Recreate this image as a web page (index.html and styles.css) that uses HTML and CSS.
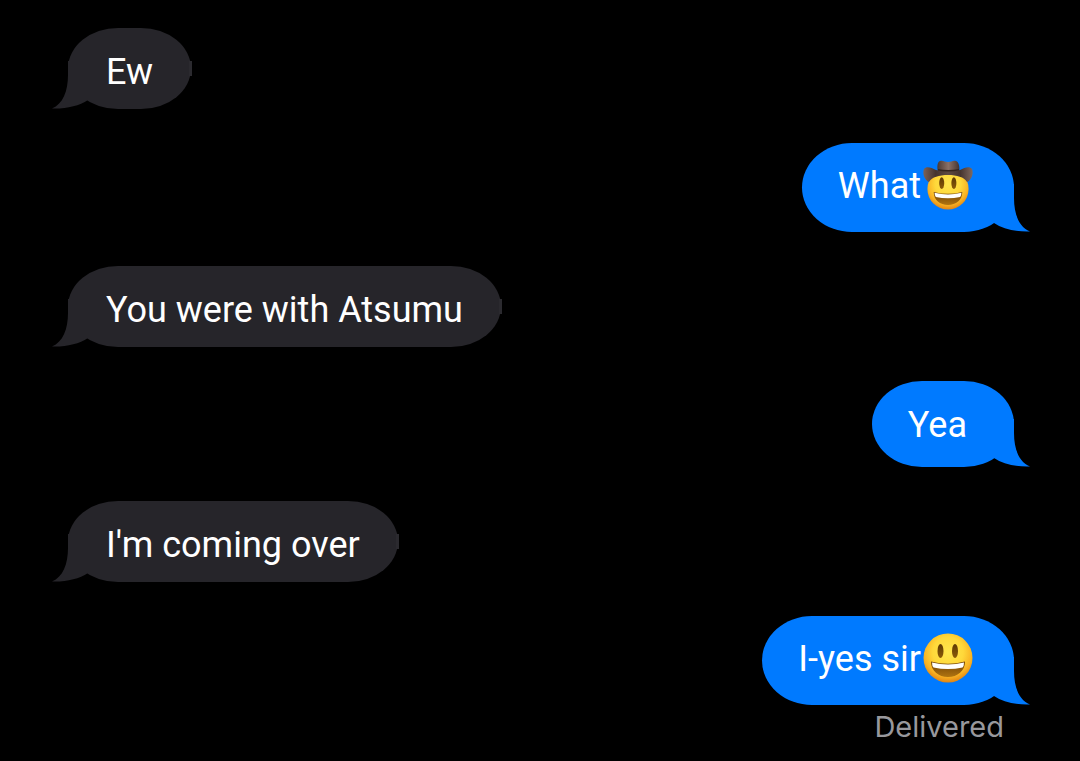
FILE: index.html
```html
<!DOCTYPE html>
<html lang="en">
<head>
    <meta charset="UTF-8">
    <meta name="viewport" content="width=device-width, initial-scale=1.0">
    <title>Messages</title>
    <link rel="stylesheet" href="styles.css">
</head>
<body>
    <!-- shared shapes -->
    <svg class="defs" aria-hidden="true">
        <defs>
            <radialGradient id="face" cx="50%" cy="38%" r="62%">
                <stop offset="0" stop-color="#ffe64e"/>
                <stop offset="0.5" stop-color="#ffd83a"/>
                <stop offset="0.8" stop-color="#f9b323"/>
                <stop offset="1" stop-color="#e08415"/>
            </radialGradient>
            <linearGradient id="eye" x1="0" y1="0" x2="0" y2="1">
                <stop offset="0" stop-color="#5e3904"/>
                <stop offset="1" stop-color="#8b5a08"/>
            </linearGradient>
            <linearGradient id="mouth" x1="0" y1="0" x2="0" y2="1">
                <stop offset="0" stop-color="#6d3f06"/>
                <stop offset="1" stop-color="#b07410"/>
            </linearGradient>
            <linearGradient id="crown" x1="0" y1="0" x2="1" y2="0">
                <stop offset="0" stop-color="#4a3833"/>
                <stop offset="0.5" stop-color="#8a7066"/>
                <stop offset="1" stop-color="#443430"/>
            </linearGradient>
            <linearGradient id="brim" x1="0" y1="0" x2="1" y2="0">
                <stop offset="0" stop-color="#7b6259"/>
                <stop offset="0.25" stop-color="#46342f"/>
                <stop offset="0.5" stop-color="#5f4a42"/>
                <stop offset="0.75" stop-color="#46342f"/>
                <stop offset="1" stop-color="#806960"/>
            </linearGradient>
            <symbol id="tail" viewBox="0 0 36 48">
                <path d="M0 0H20V14C20 30 25 43 36 47.5C22 48 9 45 0 39Z"/>
            </symbol>
            <symbol id="smile" viewBox="0 0 50 50">
                <circle cx="25" cy="25" r="24.5" fill="url(#face)"/>
                <ellipse cx="17.5" cy="18" rx="3" ry="7" fill="url(#eye)"/>
                <ellipse cx="32" cy="18" rx="3" ry="7" fill="url(#eye)"/>
                <path d="M8 28.5Q25 33 42 28.5C42 38 34.5 44 25 44S8 38 8 28.5Z" fill="url(#mouth)"/>
                <path d="M9 29.5Q25 33.5 41 29.5Q41 33 39.5 34.5Q25 37.5 10.5 34.5Q9 33 9 29.5Z" fill="#fff"/>
            </symbol>
        </defs>
    </svg>

    <main class="chat">
        <div class="message received">
            <span class="text">Ew</span>
            <svg class="tail"><use href="#tail"/></svg>
        </div>
        <div class="message sent with-emoji">
            <span class="text">What</span>
            <svg class="emoji" viewBox="0 0 50 50" role="img" aria-label="cowboy hat face">
                <use href="#smile" x="4" y="8" width="42" height="42"/>
                <path d="M15 13C14 7 14 2 17 1C20 0 22 2 25 2S30 0 33 1C36 2 37 7 36 13Z" fill="url(#crown)"/>
                <path d="M15 9Q25 11 36 9V12H15Z" fill="#35251f"/>
                <path d="M1 9C3 6 8 7 13 10Q25 13 37 10C42 7 47 6 49 9C51 14 48 20 44 22C41 17 34 15 25 15S9 17 6 22C2 20 -1 14 1 9Z" fill="url(#brim)"/>
            </svg>
            <svg class="tail"><use href="#tail"/></svg>
        </div>
        <div class="message received">
            <span class="text">You were with Atsumu</span>
            <svg class="tail"><use href="#tail"/></svg>
        </div>
        <div class="message sent">
            <span class="text">Yea</span>
            <svg class="tail"><use href="#tail"/></svg>
        </div>
        <div class="message received">
            <span class="text">I'm coming over</span>
            <svg class="tail"><use href="#tail"/></svg>
        </div>
        <div class="message sent with-emoji">
            <span class="text">I-yes sir</span>
            <svg class="emoji" viewBox="0 0 50 50" role="img" aria-label="smiling face">
                <use href="#smile" width="50" height="50"/>
            </svg>
            <svg class="tail"><use href="#tail"/></svg>
        </div>
        <p class="status">Delivered</p>
    </main>
</body>
</html>
```

FILE: styles.css
```css
body {
    margin: 0;
    background-color: #000;
    color: #fff;
    font-family: Roboto, "Liberation Sans", sans-serif;
}
.defs {
    position: absolute;
    width: 0;
    height: 0;
}
.chat {
    display: flex;
    flex-direction: column;
    gap: 34px;
    padding: 28px 66px 0 68px;
}
.message {
    position: relative;
    display: flex;
    align-items: center;
    font-size: 36px;
    line-height: 45px;
    border-radius: 50px / 50%;
}
.text {
    padding-top: 2px;
}
.received {
    align-self: flex-start;
    padding: 20px 38px 14px 38px;
    background-color: #26252a;
}
.sent {
    align-self: flex-end;
    padding: 20px 47px 19px 36px;
    background-color: #007aff;
}
.with-emoji {
    padding: 17px 41px 22px 36px;
}
.emoji {
    width: 50px;
    height: 50px;
    margin-left: 2px;
}
/* small flat edge on the side opposite the tail */
.received::after {
    content: "";
    position: absolute;
    top: 33px;
    right: -1px;
    width: 3px;
    height: 15px;
    background-color: #2b2a2f;
}
.tail {
    position: absolute;
    right: -16px;
    bottom: 0;
    width: 36px;
    height: 48px;
    fill: #007aff;
}
.received .tail {
    right: auto;
    left: -16px;
    transform: scaleX(-1);
    fill: #26252a;
}
.status {
    margin: -30px 10px 0 0;
    align-self: flex-end;
    color: #98989d;
    font-family: Inter, "Liberation Sans", sans-serif;
    font-size: 29px;
    line-height: 36px;
}
```
